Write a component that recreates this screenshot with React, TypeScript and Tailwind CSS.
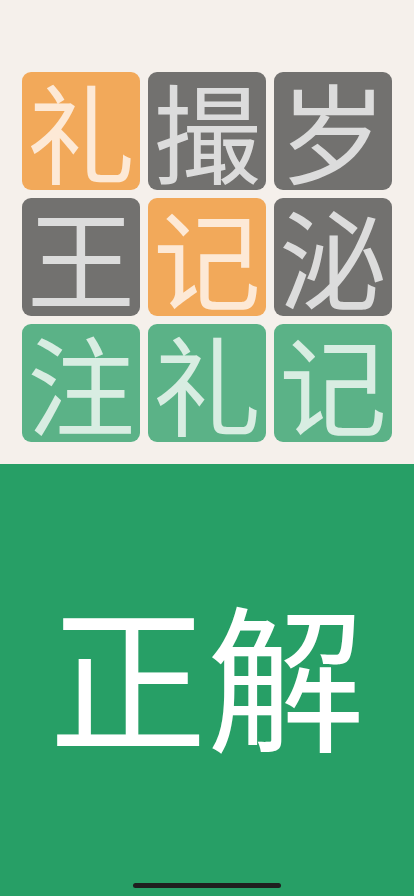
import React from 'react';

type Tone = 'orange' | 'gray' | 'green';

const tiles: { ch: string; tone: Tone }[] = [
  { ch: '礼', tone: 'orange' },
  { ch: '撮', tone: 'gray' },
  { ch: '岁', tone: 'gray' },
  { ch: '王', tone: 'gray' },
  { ch: '记', tone: 'orange' },
  { ch: '泌', tone: 'gray' },
  { ch: '注', tone: 'green' },
  { ch: '礼', tone: 'green' },
  { ch: '记', tone: 'green' },
];

const toneClass: Record<Tone, string> = {
  orange: 'bg-[#f2a95a] text-[#fde9d6]',
  gray: 'bg-[#72716f] text-[#dcdcdc]',
  green: 'bg-[#5bb287] text-[#d8ede2]',
};

const Tile: React.FC<{ ch: string; tone: Tone }> = ({ ch, tone }) => (
  <div
    className={`flex h-[118px] w-[118px] items-center justify-center rounded-[9px] pb-[4px] text-[108px] leading-none ${toneClass[tone]}`}
  >
    {ch}
  </div>
);

export default function App() {
  return (
    <div
      className="flex h-[896px] w-[414px] flex-col overflow-hidden bg-[#f5f0eb]"
      style={{ fontFamily: '"Noto Sans CJK SC", "Noto Sans CJK JP", sans-serif' }}
    >
      <div className="flex h-[464px] shrink-0 justify-center pt-[72px]">
        <div className="grid h-fit grid-cols-3 gap-2">
          {tiles.map((t, i) => (
            <Tile key={i} ch={t.ch} tone={t.tone} />
          ))}
        </div>
      </div>
      <div className="relative flex flex-1 items-center justify-center bg-[#279f66] pb-[16px]">
        <span className="text-[158px] leading-none text-white">正解</span>
        <div className="absolute bottom-[8px] left-1/2 h-[5px] w-[148px] -translate-x-1/2 rounded-full bg-[#1f1f1f]" />
      </div>
    </div>
  );
}
